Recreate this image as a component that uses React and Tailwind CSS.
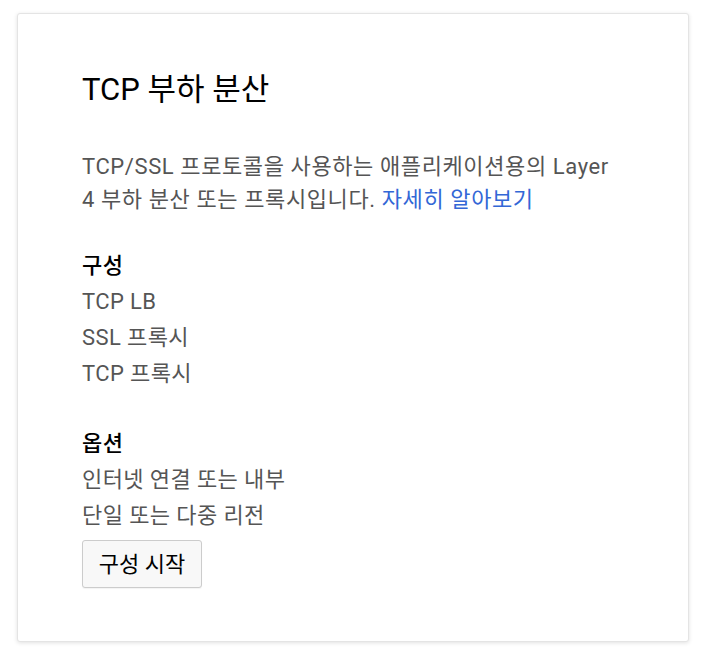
export default function App() {
  const font = { fontFamily: 'Roboto, "Noto Sans CJK KR", sans-serif' };
  return (
    <div className="w-[704px] h-[662px] bg-white pt-[13px] pl-[17px]" style={font}>
      <div className="w-[672px] h-[629px] bg-white rounded-[3px] border border-[#e4e4e4] shadow-[0_1px_4px_rgba(0,0,0,0.12)] pl-[64px] pr-[68px] pt-[58px]">
        <h1 className="text-[31px] leading-[36px] text-[#000000] font-normal">TCP 부하 분산</h1>
        <p className="mt-[42px] text-[22px] leading-[33px] tracking-[0.6px] text-[#555555]">
          TCP/SSL 프로토콜을 사용하는 애플리케이션용의 Layer 4 부하 분산 또는 프록시입니다.{' '}
          <a className="text-[#3367d6]">자세히 알아보기</a>
        </p>
        <div className="mt-[32px] text-[22px] leading-[36px] tracking-[0.4px]">
          <div className="text-[#000000] font-medium">구성</div>
          <div className="text-[#555555]">TCP LB</div>
          <div className="text-[#555555]">SSL 프록시</div>
          <div className="text-[#555555]">TCP 프록시</div>
        </div>
        <div className="mt-[34px] text-[22px] leading-[36px] tracking-[0.4px]">
          <div className="text-[#000000] font-medium">옵션</div>
          <div className="text-[#555555]">인터넷 연결 또는 내부</div>
          <div className="text-[#555555]">단일 또는 다중 리전</div>
        </div>
        <button className="mt-[6px] h-[48px] w-[120px] rounded-[3px] border border-[#cccccc] bg-[#f8f8f8] text-[22px] text-[#000000] shadow-[0_1px_1px_rgba(0,0,0,0.05)]">
          구성 시작
        </button>
      </div>
    </div>
  );
}
